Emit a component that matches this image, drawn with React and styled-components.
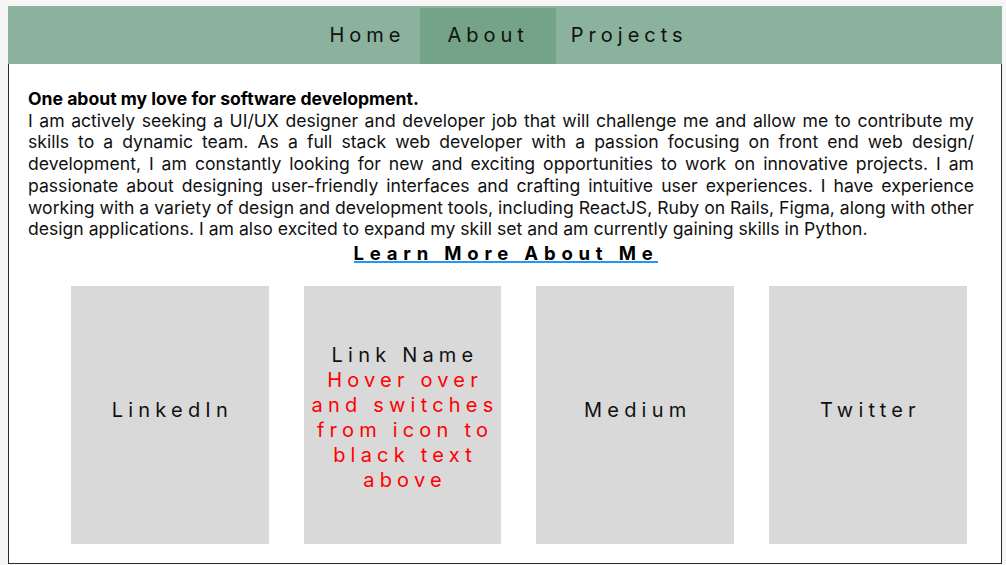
import React from "react";
import styled, { createGlobalStyle } from "styled-components";

const GlobalStyle = createGlobalStyle`
  html, body {
    margin: 0;
    padding: 0;
    background: #f5f5f5;
    font-family: Inter, "Noto Sans", "Liberation Sans", sans-serif;
    color: #000;
  }
  * { box-sizing: border-box; }
`;

const Frame = styled.div`
  width: 994px;
  margin: 6px 0 0 8px;
  display: flex;
  flex-direction: column;
`;

const NavBar = styled.nav`
  height: 58px;
  padding: 2px 0 0 7px;
  background: #8ab29c;
  display: flex;
  justify-content: center;
  align-items: stretch;
`;

const NavItem = styled.a`
  display: flex;
  align-items: center;
  padding: 0 ${(p) => (p.$active ? "27px" : "15px")} 2px;
  font-size: 20px;
  letter-spacing: 5px;
  color: #111;
  text-decoration: none;
  background: ${(p) => (p.$active ? "#74a387" : "transparent")};
`;

const Content = styled.main`
  background: #fff;
  border: 1px solid #2a2a2a;
  border-top: none;
  padding: 24px 27px 19px 19px;
  display: flex;
  flex-direction: column;
`;

const Paragraph = styled.p`
  margin: 0;
  font-size: 17.6px;
  line-height: 21.7px;
  text-align: justify;
  color: #111;
`;

const Lead = styled.strong`
  font-weight: 700;
  color: #000;
`;

const LearnMore = styled.h2`
  align-self: center;
  margin: 5px 0 0 10px;
  font-size: 18.5px;
  font-weight: 700;
  letter-spacing: 5.8px;
  line-height: 16px;
  padding: 0;
  border-bottom: 2.5px solid #2196f3;
  color: #000;
`;

const CardRow = styled.div`
  display: flex;
  gap: 35px;
  margin: 23.5px 0 0 43px;
`;

const Card = styled.a`
  width: 197.7px;
  height: 258px;
  flex: none;
  background: #d9d9d9;
  display: flex;
  flex-direction: column;
  align-items: center;
  justify-content: center;
  text-align: center;
  text-decoration: none;
  padding: 5px 2px 0 7px;
  font-size: 20px;
  line-height: 25px;
  letter-spacing: 5.2px;
  color: #111;
`;

const CardTitle = styled.span`
  color: #111;
  margin-bottom: ${(p) => (p.$solo ? "15px" : "0")};
`;

const CardNote = styled.span`
  color: #ff0000;
`;

export default function App() {
  return (
    <>
      <GlobalStyle />
      <Frame>
        <NavBar>
          <NavItem href="#">Home</NavItem>
          <NavItem href="#" $active>
            About
          </NavItem>
          <NavItem href="#">Projects</NavItem>
        </NavBar>
        <Content>
          <Paragraph>
            <Lead>One about my love for software development.</Lead>
            <br />
            I am actively seeking a UI/UX designer and developer job that will
            challenge me and allow me to contribute my skills to a dynamic team.
            As a full stack web developer with a passion focusing on front end
            web design/ development, I am constantly looking for new and
            exciting opportunities to work on innovative projects. I am
            passionate about designing user-friendly interfaces and crafting
            intuitive user experiences. I have experience working with a
            variety of design and development tools, including ReactJS, Ruby on
            Rails, Figma, along with other design applications. I am also
            excited to expand my skill set and am currently gaining skills in
            Python.
          </Paragraph>
          <LearnMore>Learn More About Me</LearnMore>
          <CardRow>
            <Card href="#">
              <CardTitle $solo>LinkedIn</CardTitle>
            </Card>
            <Card href="#">
              <CardTitle>Link Name</CardTitle>
              <CardNote>Hover over and switches from icon to black text above</CardNote>
            </Card>
            <Card href="#">
              <CardTitle $solo>Medium</CardTitle>
            </Card>
            <Card href="#">
              <CardTitle $solo>Twitter</CardTitle>
            </Card>
          </CardRow>
        </Content>
      </Frame>
    </>
  );
}
